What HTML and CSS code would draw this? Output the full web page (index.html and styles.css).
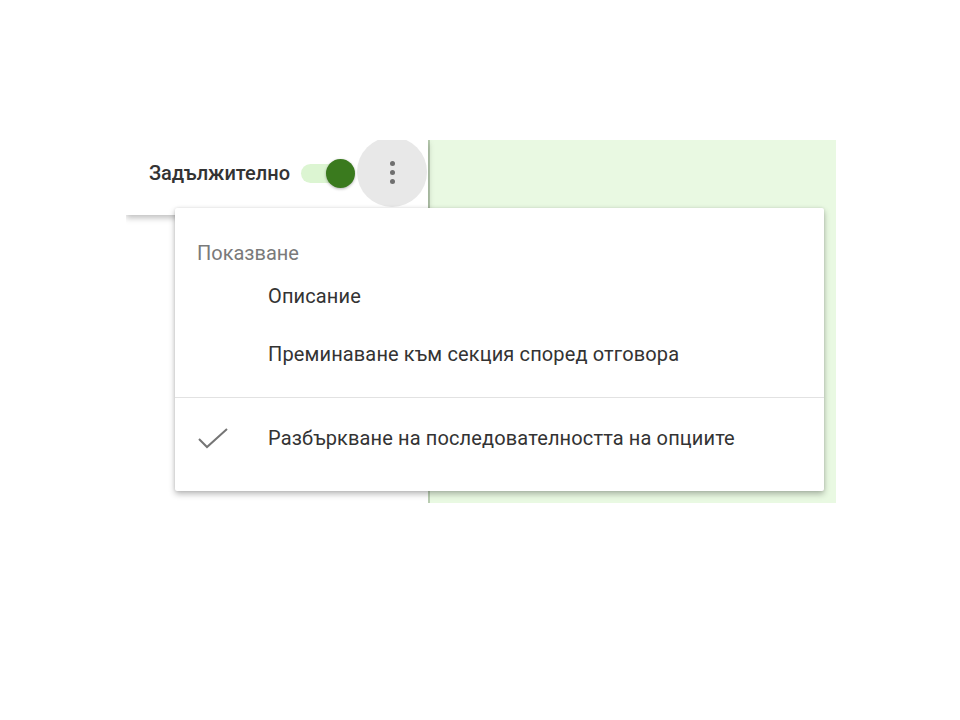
FILE: index.html
```html
<!DOCTYPE html>
<html lang="bg">
<head>
  <meta charset="UTF-8" />
  <title>Меню на въпрос</title>
  <link rel="stylesheet" href="styles.css">
</head>
<body>

  <div class="shot">
    <div class="left-col">
      <div class="question-bar">
        <span class="required-label">Задължително</span>
        <div class="toggle">
          <div class="toggle-track"></div>
          <div class="toggle-knob"></div>
        </div>
        <button class="more-button" aria-label="Още опции">
          <span class="dot"></span>
          <span class="dot"></span>
          <span class="dot"></span>
        </button>
      </div>
    </div>
    <div class="right-col"></div>

    <div class="menu">
      <div class="menu-header">Показване</div>
      <div class="menu-item">
        <span class="menu-icon"></span>
        <span class="menu-text">Описание</span>
      </div>
      <div class="menu-item">
        <span class="menu-icon"></span>
        <span class="menu-text">Преминаване към секция според отговора</span>
      </div>
      <div class="menu-divider"></div>
      <div class="menu-item checked">
        <span class="menu-icon">
          <svg width="32" height="24" viewBox="0 0 32 24">
            <path d="M2 13 L10 21 L30 3" fill="none" stroke="#757575" stroke-width="2"/>
          </svg>
        </span>
        <span class="menu-text">Разбъркване на последователността на опциите</span>
      </div>
    </div>
  </div>

</body>
</html>
```

FILE: styles.css
```css
body {
  margin: 0;
  background-color: #ffffff;
  font-family: Roboto, 'Liberation Sans', sans-serif;
  color: #333;
}

.shot {
  position: relative;
  display: flex;
  width: 710px;
  height: 363px;
  margin: 140px 0 0 126px;
  overflow: hidden;
}

.left-col {
  width: 302px;
  background-color: #fff;
}

.question-bar {
  height: 75px;
  display: flex;
  align-items: flex-start;
  justify-content: flex-end;
  background-color: #fff;
  box-shadow: 0 3px 6px rgba(0, 0, 0, 0.25);
  position: relative;
}

.required-label {
  font-size: 20px;
  line-height: 24px;
  font-weight: 500;
  color: #333;
  margin: 21px 11px 0 0;
}

.toggle {
  position: relative;
  width: 54px;
  height: 30px;
  margin-top: 18px;
}

.toggle-track {
  position: absolute;
  left: 0;
  top: 6px;
  width: 44px;
  height: 19px;
  border-radius: 10px;
  background-color: #dcf5d2;
}

.toggle-knob {
  position: absolute;
  left: 25px;
  top: 1px;
  width: 29px;
  height: 29px;
  border-radius: 50%;
  background-color: #3a7a1e;
  box-shadow: 0 1px 3px rgba(0, 0, 0, 0.3);
}

.more-button {
  width: 70px;
  height: 70px;
  margin: -3px 1px 0 2px;
  border: none;
  border-radius: 50%;
  background-color: #e8e8e8;
  display: flex;
  flex-direction: column;
  align-items: center;
  justify-content: center;
  gap: 4px;
  padding: 0;
}

.dot {
  width: 5px;
  height: 5px;
  border-radius: 50%;
  background-color: #6f6f6f;
}

.right-col {
  flex: 1;
  background-color: #e9f9e2;
  border-left: 2px solid #b9cdb1;
}

.menu {
  position: absolute;
  left: 49px;
  top: 68px;
  width: 649px;
  height: 283px;
  background-color: #fff;
  border-radius: 2px;
  box-shadow: 0 3px 6px rgba(0, 0, 0, 0.28), 0 0 3px rgba(0, 0, 0, 0.1);
}

.menu-header {
  font-size: 20px;
  line-height: 24px;
  color: #7a7a7a;
  padding: 33px 0 0 22px;
  height: 26px;
}

.menu-item {
  display: flex;
  align-items: center;
  height: 58px;
  font-size: 20px;
  letter-spacing: 0.13px;
  color: #333;
}

.menu-icon {
  width: 93px;
  display: flex;
  align-items: center;
  padding-left: 22px;
  box-sizing: border-box;
}

.menu-divider {
  height: 1px;
  background-color: #e2e2e2;
  margin: 14px 0 11px;
}
```
